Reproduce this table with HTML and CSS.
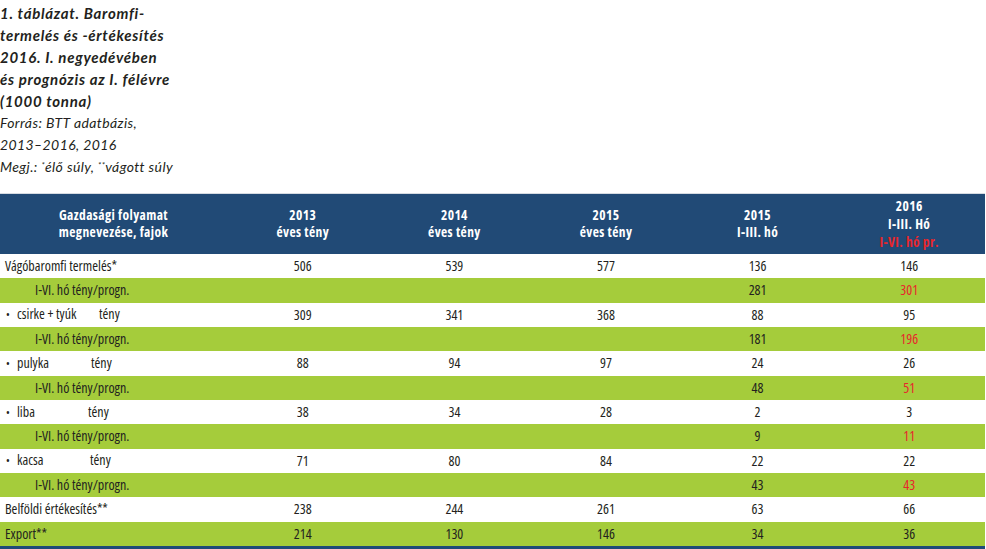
FILE: index.html
```html
<!DOCTYPE html>
<html lang="hu">
<head>
<meta charset="utf-8">
<title>1. táblázat</title>
<link rel="stylesheet" href="styles.css">
</head>
<body>
<div class="caption">
  <div class="title">1. táblázat. Baromfi-<br>termelés és -értékesítés<br>2016. I. negyedévében<br>és prognózis az I. félévre<br>(1000 tonna)</div>
  <div class="note">Forrás: BTT adatbázis,<br>2013–2016, 2016<br>Megj.: <sup>*</sup>élő súly, <sup>**</sup>vágott súly</div>
</div>
<table class="data">
  <thead>
    <tr>
      <th class="c-label">Gazdasági folyamat<br>megnevezése, fajok</th>
      <th>2013<br>éves tény</th>
      <th>2014<br>éves tény</th>
      <th>2015<br>éves tény</th>
      <th>2015<br>I-III. hó</th>
      <th class="c-last">2016<br>I-III. Hó<br><span class="red">I-VI. hó pr.</span></th>
    </tr>
  </thead>
  <tbody>
    <tr class="w"><td class="lbl">Vágóbaromfi termelés*</td><td>506</td><td>539</td><td>577</td><td>136</td><td>146</td></tr>
    <tr class="g"><td class="lbl sub">I-VI. hó tény/progn.</td><td></td><td></td><td></td><td>281</td><td class="red">301</td></tr>
    <tr class="w"><td class="lbl"><span class="bul">•</span><span class="sp sp-csirke">csirke + tyúk</span>tény</td><td>309</td><td>341</td><td>368</td><td>88</td><td>95</td></tr>
    <tr class="g"><td class="lbl sub">I-VI. hó tény/progn.</td><td></td><td></td><td></td><td>181</td><td class="red">196</td></tr>
    <tr class="w"><td class="lbl"><span class="bul">•</span><span class="sp sp-pulyka">pulyka</span>tény</td><td>88</td><td>94</td><td>97</td><td>24</td><td>26</td></tr>
    <tr class="g"><td class="lbl sub">I-VI. hó tény/progn.</td><td></td><td></td><td></td><td>48</td><td class="red">51</td></tr>
    <tr class="w"><td class="lbl"><span class="bul">•</span><span class="sp sp-liba">liba</span>tény</td><td>38</td><td>34</td><td>28</td><td>2</td><td>3</td></tr>
    <tr class="g"><td class="lbl sub">I-VI. hó tény/progn.</td><td></td><td></td><td></td><td>9</td><td class="red">11</td></tr>
    <tr class="w"><td class="lbl"><span class="bul">•</span><span class="sp sp-kacsa">kacsa</span>tény</td><td>71</td><td>80</td><td>84</td><td>22</td><td>22</td></tr>
    <tr class="g"><td class="lbl sub">I-VI. hó tény/progn.</td><td></td><td></td><td></td><td>43</td><td class="red">43</td></tr>
    <tr class="w"><td class="lbl">Belföldi értékesítés**</td><td>238</td><td>244</td><td>261</td><td>63</td><td>66</td></tr>
    <tr class="g"><td class="lbl">Export**</td><td>214</td><td>130</td><td>146</td><td>34</td><td>36</td></tr>
  </tbody>
</table>
</body>
</html>
```
FILE: styles.css
```css
html, body {
  margin: 0;
  padding: 0;
  background: #ffffff;
}

body {
  width: 986px;
  height: 549px;
  overflow: hidden;
  color: #231f20;
}

.caption {
  padding-top: 2px;
  margin-bottom: 15px;
  font-family: Lato, "Liberation Sans", sans-serif;
  font-style: italic;
  line-height: 22px;
}

.title {
  font-weight: 700;
  font-size: 15px;
  letter-spacing: 0.7px;
}

.note {
  font-weight: 400;
  font-size: 14px;
  letter-spacing: 0.4px;
}

.note sup {
  font-size: 8px;
  vertical-align: 4px;
  line-height: 0;
}

.data {
  width: 985px;
  border-collapse: collapse;
  table-layout: fixed;
  border-top: 1px solid #d6dbe2;
  border-bottom: 3px solid #1f4a78;
  font-family: "Open Sans", sans-serif;
  font-stretch: 75%;
}

.data th {
  background: #214a76;
  color: #ffffff;
  font-weight: 700;
  font-size: 13.5px;
  line-height: 17px;
  letter-spacing: 0.4px;
  height: 60px;
  padding: 0;
  text-align: center;
  vertical-align: middle;
}

.data th.c-last {
  line-height: 18px;
}

.data th.c-label {
  width: 227px;
}

.data th .red {
  color: #e8262c;
}

.data td {
  height: 24.33px;
  padding: 0;
  font-size: 14px;
  line-height: 16px;
  text-align: center;
  vertical-align: middle;
  white-space: nowrap;
}

.data tr.g td {
  background: #a5cc3b;
}

.data td.lbl {
  text-align: left;
  padding-left: 5px;
}

.data td.sub {
  padding-left: 35px;
}

.data td.red {
  color: #e8262c;
}

.bul {
  display: inline-block;
  width: 11px;
  font-size: 10px;
  padding-left: 1px;
}

.sp {
  display: inline-block;
}

.sp-csirke { width: 82px; }
.sp-pulyka { width: 74px; }
.sp-liba { width: 71px; }
.sp-kacsa { width: 73px; }
```
